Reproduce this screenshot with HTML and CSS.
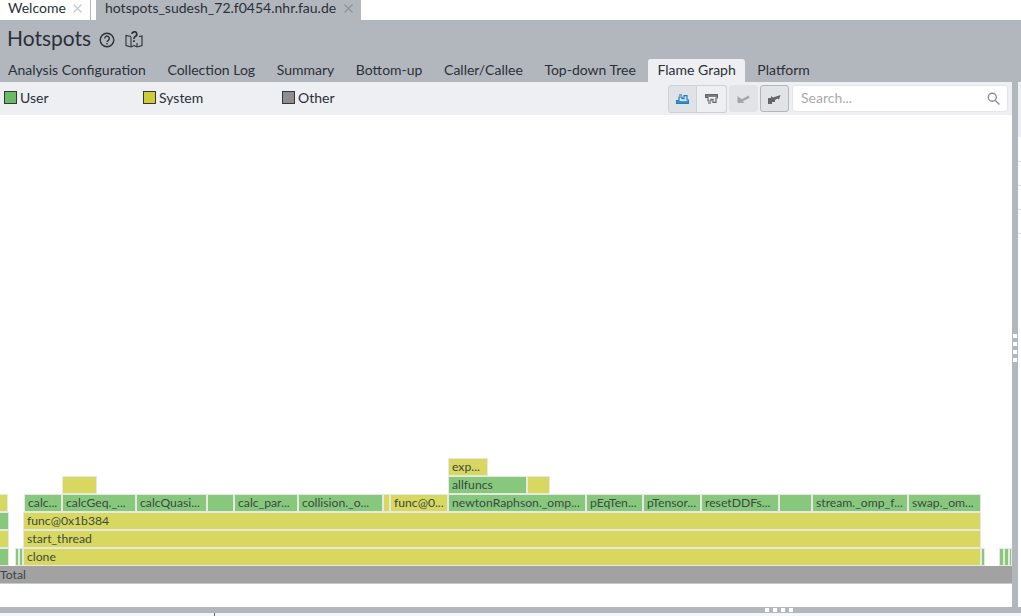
FILE: index.html
```html
<!DOCTYPE html>
<html lang="en">
<head>
  <meta charset="UTF-8">
  <title>Hotspots</title>
  <link rel="stylesheet" href="styles.css">
</head>
<body>

<div class="doc-tabs">
  <div class="doc-tab active">Welcome
    <svg class="close" width="9" height="9" viewBox="0 0 9 9" stroke="#c3c6ca" stroke-width="1.1"><path d="M.5.5l8 8M8.5.5l-8 8"/></svg>
  </div>
  <div class="doc-tab open">hotspots_sudesh_72.f0454.nhr.fau.de
    <svg class="close" width="9" height="9" viewBox="0 0 9 9" stroke="#8e9399" stroke-width="1.1"><path d="M.5.5l8 8M8.5.5l-8 8"/></svg>
  </div>
</div>

<div class="panel">
  <div class="title-row">
    <h1>Hotspots</h1>
    <svg class="help" width="16" height="16" viewBox="0 0 16 16" fill="none" stroke="#2b3036" stroke-width="1.4">
      <circle cx="8" cy="8" r="6.8"/>
      <path d="M5.7 6.5a2.3 2.3 0 1 1 3.6 1.8c-.9.6-1.3 1-1.3 1.8"/>
      <path d="M8 11v1.4"/>
    </svg>
    <svg class="guide" width="18" height="17" viewBox="0 0 18 17" fill="none" stroke="#2b3036" stroke-width="1.1">
      <path d="M6 5.5L1 4.5v10l5 1.5 3-1.5 3 1.5 5-1.5V5l-3 .5"/>
      <path d="M6 6v9.5M12 12v3.5"/>
      <path d="M7 3a2.4 2.4 0 1 1 3.3 2.4C9.5 6 9 6.5 9 8" stroke-width="1.7"/>
      <path d="M9 9.2V11" stroke-width="1.7"/>
    </svg>
  </div>

  <div class="view-tabs">
    <div class="view-tab">Analysis Configuration</div>
    <div class="view-tab">Collection Log</div>
    <div class="view-tab">Summary</div>
    <div class="view-tab">Bottom-up</div>
    <div class="view-tab">Caller/Callee</div>
    <div class="view-tab">Top-down Tree</div>
    <div class="view-tab selected">Flame Graph</div>
    <div class="view-tab">Platform</div>
  </div>

  <div class="body">
    <div class="content">
      <div class="toolbar">
        <div class="legend">
          <div class="legend-item"><span class="swatch user"></span>User</div>
          <div class="legend-item"><span class="swatch system"></span>System</div>
          <div class="legend-item"><span class="swatch other"></span>Other</div>
        </div>
        <div class="btn-group">
          <div class="tool-btn on">
            <svg width="13" height="10" viewBox="0 0 13 10" fill="none" stroke="#1f7fc4" stroke-width="1.2">
              <path d="M.6 9.400h11.800V6H11V1.600H8v3H6V3H3v3.500H.6z"/>
              <path d="M3 1h3"/>
              <path d="M1 8h11" stroke-width="1.600"/>
            </svg>
          </div>
          <div class="tool-btn">
            <svg width="13" height="10" viewBox="0 0 13 10" fill="none" stroke="#666" stroke-width="1.2">
              <path d="M.6.600h11.800V4H11v4.400H8v-3H6V7H3V3.500H.6z"/>
              <path d="M3 9h3"/>
              <path d="M1 2h11" stroke-width="1.600"/>
            </svg>
          </div>
        </div>
        <div class="tool-btn single off">
          <svg width="13" height="10" viewBox="0 0 13 10" fill="#a3a5a8">
            <path d="M.5 2v7h7L5.700 7.200 12.500 4l-1-2.500-6.800 3.800z"/>
          </svg>
        </div>
        <div class="tool-btn single pressed">
          <svg width="13" height="10" viewBox="0 0 13 10" fill="#666">
            <path d="M0 10V4h3V2l2 1.500L12.500 1 11 5.500 9.500 4.500 7 6v2H4v2z"/>
          </svg>
        </div>
        <div class="search">
          <span>Search...</span>
          <svg width="13" height="13" viewBox="0 0 13 13" fill="none" stroke="#8a8d90" stroke-width="1.4">
            <circle cx="5.3" cy="5.3" r="4"/>
            <path d="M8.4 8.4l4 4"/>
          </svg>
        </div>
      </div>

      <div class="graph">
        <div class="row">
          <div class="gap w448"></div>
          <div class="box sys w40">exp...</div>
        </div>
        <div class="row">
          <div class="gap w62"></div>
          <div class="box sys w35"></div>
          <div class="gap w351"></div>
          <div class="box usr w79">allfuncs</div>
          <div class="box sys w23"></div>
        </div>
        <div class="row">
          <div class="box sys w8 edge"></div>
          <div class="gap w16"></div>
          <div class="box usr w38">calc...</div>
          <div class="box usr w74">calcGeq._...</div>
          <div class="box usr w71">calcQuasi...</div>
          <div class="box usr w27"></div>
          <div class="box usr w64">calc_par...</div>
          <div class="box usr w85">collision._o...</div>
          <div class="box sys w7"></div>
          <div class="box sys w58">func@0...</div>
          <div class="box usr w138">newtonRaphson._omp...</div>
          <div class="box usr w57">pEqTen...</div>
          <div class="box usr w58">pTensor...</div>
          <div class="box usr w78">resetDDFs...</div>
          <div class="box usr w33"></div>
          <div class="box usr w96">stream._omp_f...</div>
          <div class="box usr w73">swap._om...</div>
        </div>
        <div class="row">
          <div class="box usr w9 edge"></div>
          <div class="gap w14"></div>
          <div class="box sys w958">func@0x1b384</div>
        </div>
        <div class="row">
          <div class="box sys w9 edge"></div>
          <div class="gap w14"></div>
          <div class="box sys w958">start_thread</div>
        </div>
        <div class="row">
          <div class="box usr w9 edge"></div>
          <div class="gap w6"></div>
          <div class="box usr w4"></div>
          <div class="box usr w4"></div>
          <div class="box sys w958">clone</div>
          <div class="box usr w4"></div>
          <div class="gap w14"></div>
          <div class="box usr w5"></div>
          <div class="box usr w5"></div>
          <div class="box usr w3"></div>
        </div>
        <div class="total">Total</div>
      </div>
    </div>

    <div class="sash-v"><i></i><i></i><i></i><i></i></div>

    <div class="side">
      <div class="side-head"></div>
      <div class="side-line"></div>
      <div class="side-line"></div>
      <div class="side-line"></div>
      <div class="side-line"></div>
    </div>
  </div>

  <div class="sash-h"><i></i><i></i><i></i><i></i></div>
  <div class="status">
    <div class="status-left"></div>
  </div>
</div>

</body>
</html>
```

FILE: styles.css
```css
* {
  box-sizing: border-box;
}
html, body {
  height: 100%;
}
body {
  margin: 0;
  overflow: hidden;
  background: #fff;
  color: #2b3036;
  font-family: Lato, "Noto Sans", sans-serif;
  display: flex;
  flex-direction: column;
}

.doc-tabs {
  display: flex;
  height: 20px;
  flex: none;
  font-size: 14px;
  line-height: 16px;
}
.doc-tab {
  padding-left: 8px;
}
.doc-tab.active {
  width: 91px;
  border-right: 1px solid #b2b7be;
}
.doc-tab.open {
  margin-left: 5px;
  width: 265px;
  padding-left: 9px;
  background: #b2b7be;
}
.close {
  margin-left: 4px;
}

.panel {
  flex: 1;
  background: #b2b7be;
  min-height: 0;
  display: flex;
  flex-direction: column;
}
.title-row {
  height: 38px;
  flex: none;
  display: flex;
  align-items: center;
  padding-left: 7px;
}
h1 {
  margin: 0 0 3px;
  font-size: 21px;
  font-weight: 400;
}
.help {
  margin-left: 8px;
  margin-top: 1px;
}
.guide {
  margin-left: 10px;
  margin-top: 1px;
}

.view-tabs {
  display: flex;
  height: 24px;
  flex: none;
  font-size: 14px;
  padding: 1px 0 0;
  margin-left: -1px;
}
.view-tab {
  padding: 2px 9px 0;
  margin-right: 3.6px;
  line-height: 18px;
}
.view-tab.selected {
  background: #edeff3;
  border-radius: 3px 3px 0 0;
}

.body {
  flex: 1;
  min-height: 0;
  display: flex;
}
.content {
  width: 1012px;
  flex: none;
  display: flex;
  flex-direction: column;
  background: #fff;
}

.toolbar {
  height: 33px;
  flex: none;
  background: #edeff3;
  display: flex;
  align-items: center;
  padding: 0 4px 0 0;
}
.legend {
  display: flex;
  flex: 1;
  font-size: 14px;
  padding: 0 0 2px 4px;
}
.legend-item {
  width: 139px;
  display: flex;
  align-items: center;
}
.swatch {
  width: 13px;
  height: 13px;
  margin-right: 3px;
  border: 1px solid #33373b;
}
.swatch.user { background: #6cba66; }
.swatch.system { background: #cfcd37; }
.swatch.other { background: #8e8e8e; }

.btn-group {
  display: flex;
  margin-right: 2px;
}
.tool-btn {
  width: 29px;
  height: 28px;
  border: 1px solid #ced1d5;
  background: #edeff3;
  display: flex;
  align-items: center;
  justify-content: center;
}
.tool-btn.on {
  border-radius: 3px 0 0 3px;
  background: #dfe2e6;
}
.btn-group .tool-btn + .tool-btn {
  border-left: 0;
  width: 30px;
  border-radius: 0 3px 3px 0;
}
.tool-btn.single {
  height: 27px;
  margin-right: 2px;
  border-radius: 3px;
  background: #e1e3e6;
  border-color: #e1e3e6;
}
.tool-btn.pressed {
  border-color: #b4b7ba;
}
.search {
  width: 216px;
  height: 27px;
  margin-left: 1px;
  background: #fff;
  border: 1px solid #e4e6e9;
  border-radius: 3px;
  display: flex;
  align-items: center;
  justify-content: space-between;
  padding: 0 7px 0 8px;
  font-size: 14px;
  color: #a9abae;
}
.search span {
  padding-bottom: 2px;
}

.graph {
  flex: 1;
  min-height: 0;
  display: flex;
  flex-direction: column;
  justify-content: flex-end;
  padding-bottom: 23px;
  overflow: hidden;
}
.row {
  display: flex;
  height: 18px;
  flex: none;
}
.gap {
  flex: none;
}
.box {
  flex: none;
  border: 1px solid #e6e9e0;
  font-size: 12.2px;
  line-height: 15px;
  padding-left: 3px;
  white-space: nowrap;
  overflow: hidden;
  color: #3c4a44;
}
.box.usr { background: #88c87d; }
.box.sys { background: #d8d860; }
.box.edge { border-left: 0; }
.total {
  height: 18px;
  flex: none;
  background: #a2a2a2;
  border-bottom: 1px solid #c9cacb;
  font-size: 12.2px;
  line-height: 17px;
  color: #3c4348;
}

.w3 { width: 3px; padding: 0; }
.w4 { width: 4px; padding: 0; }
.w5 { width: 5px; padding: 0; }
.w6 { width: 6px; }
.w7 { width: 7px; padding: 0; }
.w8 { width: 8px; padding: 0; }
.w9 { width: 9px; padding: 0; }
.w14 { width: 14px; }
.w16 { width: 16px; }
.w23 { width: 23px; }
.w27 { width: 27px; }
.w33 { width: 33px; }
.w35 { width: 35px; }
.w38 { width: 38px; }
.w40 { width: 40px; }
.w57 { width: 57px; }
.w58 { width: 58px; }
.w62 { width: 62px; }
.w64 { width: 64px; }
.w71 { width: 71px; }
.w73 { width: 73px; }
.w74 { width: 74px; }
.w78 { width: 78px; }
.w79 { width: 79px; }
.w85 { width: 85px; }
.w96 { width: 96px; }
.w138 { width: 138px; }
.w351 { width: 351px; }
.w448 { width: 448px; }
.w958 { width: 958px; }

.sash-v {
  width: 6px;
  flex: none;
  display: flex;
  flex-direction: column;
  align-items: center;
  gap: 4px;
  padding-top: 252px;
}
.side {
  flex: 1;
  background: #fff;
}
.side-head {
  height: 55px;
  background: #edeff3;
  margin-bottom: 24px;
}
.side-line {
  height: 1px;
  background: #dcdcdc;
  margin-bottom: 23px;
}

.sash-h {
  height: 6px;
  flex: none;
  display: flex;
  align-items: center;
  gap: 4px;
  padding-left: 765px;
}
.sash-h i, .sash-v i {
  display: block;
  flex: none;
  width: 4px;
  height: 4px;
  background: #fff;
}
.status {
  height: 3px;
  flex: none;
  background: #f5f6f8;
}
.status-left {
  width: 215px;
  height: 3px;
  border-right: 1px solid #666;
}
```
